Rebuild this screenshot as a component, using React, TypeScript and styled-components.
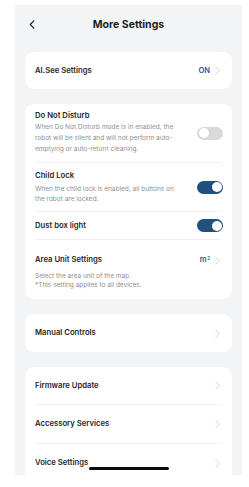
import React from "react";
import styled, { createGlobalStyle } from "styled-components";

const Global = createGlobalStyle`
  html, body { margin: 0; padding: 0; background: #ffffff; }
  body { font-family: Inter, "Noto Sans", sans-serif; -webkit-font-smoothing: antialiased; }
  * { box-sizing: border-box; }
`;

const Page = styled.div`
  position: relative;
  width: 249px;
  height: 487px;
  background: #ffffff;
  overflow: hidden;
`;

const Panel = styled.div`
  margin: 5px 0 0 15px;
  width: 227px;
  height: 470px;
  background: #f3f4f6;
  overflow: hidden;
  padding: 0 10px;
  display: flex;
  flex-direction: column;
`;

const Header = styled.div`
  position: relative;
  height: 38px;
  flex-shrink: 0;
  display: flex;
  align-items: center;
  justify-content: center;
`;

const Back = styled.svg`
  position: absolute;
  left: 4px;
  top: 15px;
`;

const Title = styled.div`
  font-size: 10.5px;
  font-weight: 700;
  color: #1c1c1e;
`;

const Card = styled.div<{ $mt: number; $grow?: boolean }>`
  background: #ffffff;
  border-radius: 9px;
  padding: 0 10px;
  margin-top: ${(p) => p.$mt}px;
  display: flex;
  flex-direction: column;
  flex-shrink: 0;
  ${(p) => (p.$grow ? "flex-grow: 1;" : "")}
`;

const Row = styled.div<{ $h: number }>`
  display: flex;
  align-items: center;
  justify-content: space-between;
  flex-shrink: 0;
  height: ${(p) => p.$h}px;
  & + & { border-top: 1px solid #f0f0f2; }
`;

const TopRow = styled(Row)`
  align-items: flex-start;
`;

const TextCol = styled.div<{ $pt: number }>`
  display: flex;
  flex-direction: column;
  padding-top: ${(p) => p.$pt}px;
`;

const Label = styled.div`
  font-size: 7.7px;
  font-weight: 600;
  color: #26272a;
  line-height: 10px;
  white-space: nowrap;
`;

const Desc = styled.div<{ $mt: number; $lh: number }>`
  font-size: 6.5px;
  color: #8e8f93;
  line-height: ${(p) => p.$lh}px;
  margin-top: ${(p) => p.$mt}px;
  white-space: nowrap;
`;

const Right = styled.div<{ $mt?: number }>`
  display: flex;
  align-items: center;
  gap: 5px;
  ${(p) => (p.$mt !== undefined ? `margin-top: ${p.$mt}px;` : "")}
`;

const Accent = styled.span`
  font-size: 7.6px;
  font-weight: 600;
  color: #255a96;
  line-height: 10px;
  sup { font-size: 4.5px; vertical-align: top; position: relative; top: -1px; margin-left: 0.5px; }
`;

const Toggle = styled.div<{ $on: boolean }>`
  width: 26px;
  height: 13px;
  border-radius: 7px;
  background: ${(p) => (p.$on ? "#21507f" : "#d9d9db")};
  position: relative;
  margin-right: -1px;
  &::after {
    content: "";
    position: absolute;
    top: 1.5px;
    ${(p) => (p.$on ? "right: 1.5px;" : "left: 1.5px;")}
    width: 10px;
    height: 10px;
    border-radius: 50%;
    background: #ffffff;
  }
`;

const HomeBar = styled.div`
  position: absolute;
  left: 89px;
  top: 467px;
  width: 80px;
  height: 3px;
  border-radius: 2px;
  background: #0a0a0a;
`;

const ChevronSvg = styled.svg`
  margin-right: 2px;
  flex-shrink: 0;
`;

const Chevron = () => (
  <ChevronSvg width="5" height="9" viewBox="0 0 5 9">
    <path d="M0.8 0.8 L4.2 4.5 L0.8 8.2" fill="none" stroke="#cdced2" strokeWidth="0.8" strokeLinecap="round" strokeLinejoin="round" />
  </ChevronSvg>
);

export default function App() {
  return (
    <Page>
      <Global />
      <Panel>
        <Header>
          <Back width="6" height="9" viewBox="0 0 6 9">
            <path d="M4.8 0.8 L1.2 4.5 L4.8 8.2" fill="none" stroke="#222" strokeWidth="1.2" strokeLinecap="round" strokeLinejoin="round" />
          </Back>
          <Title>More Settings</Title>
        </Header>

        <Card $mt={9}>
          <Row $h={37}>
            <Label>AI.See Settings</Label>
            <Right>
              <Accent>ON</Accent>
              <Chevron />
            </Right>
          </Row>
        </Card>

        <Card $mt={15}>
          <Row $h={58}>
            <TextCol $pt={0}>
              <Label>Do Not Disturb</Label>
              <Desc $mt={0.5} $lh={11}>When Do Not Disturb mode is in enabled, the</Desc>
              <Desc $mt={0} $lh={11}>robot will be silent and will not perform auto-</Desc>
              <Desc $mt={0} $lh={11}>emptying or auto-return cleaning.</Desc>
            </TextCol>
            <Toggle $on={false} />
          </Row>
          <Row $h={49}>
            <TextCol $pt={0}>
              <Label>Child Lock</Label>
              <Desc $mt={3} $lh={10}>When the child lock is enabled, all buttons on</Desc>
              <Desc $mt={0} $lh={10}>the robot are locked.</Desc>
            </TextCol>
            <Toggle $on={true} />
          </Row>
          <Row $h={28}>
            <Label>Dust box light</Label>
            <Toggle $on={true} />
          </Row>
          <TopRow $h={60}>
            <TextCol $pt={15}>
              <Label>Area Unit Settings</Label>
              <Desc $mt={6.5} $lh={9}>Select the area unit of the map.</Desc>
              <Desc $mt={0} $lh={9}>*This setting applies to all devices.</Desc>
            </TextCol>
            <Right $mt={15}>
              <Accent>m<sup>2</sup></Accent>
              <Chevron />
            </Right>
          </TopRow>
        </Card>

        <Card $mt={15}>
          <Row $h={38}>
            <Label>Manual Controls</Label>
            <Chevron />
          </Row>
        </Card>

        <Card $mt={15} $grow>
          <Row $h={37}>
            <Label>Firmware Update</Label>
            <Chevron />
          </Row>
          <Row $h={39}>
            <Label>Accessory Services</Label>
            <Chevron />
          </Row>
          <Row $h={39}>
            <Label>Voice Settings</Label>
            <Chevron />
          </Row>
        </Card>
      </Panel>
      <HomeBar />
    </Page>
  );
}
